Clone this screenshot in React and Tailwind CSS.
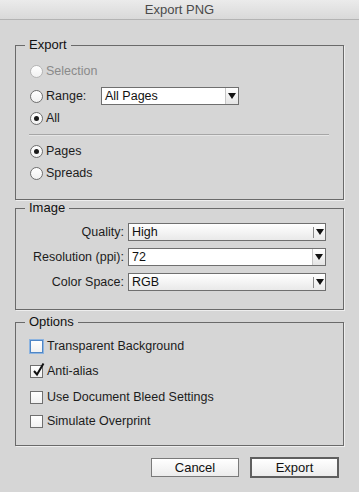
import React from 'react';

function Radio({ checked, disabled, label }) {
    return (
        <div className="flex items-center h-[20px]">
            <span
                className={`w-[13px] h-[13px] rounded-full border flex items-center justify-center bg-gradient-to-b from-white to-[#f1f1f1] ${disabled ? 'border-[#b5b5b5]' : 'border-[#6f6f6f]'}`}
            >
                {checked && <span className="w-[5px] h-[5px] rounded-full bg-[#1a1a1a]" />}
            </span>
            <span className={`ml-[3px] ${disabled ? 'text-[#8a8a8a]' : 'text-[#1c1c1c]'}`}>{label}</span>
        </div>
    );
}

function Checkbox({ checked, focused, label }) {
    return (
        <div className="flex items-center h-[20px]">
            <span
                className={`relative w-[13px] h-[13px] border bg-gradient-to-b from-white to-[#f1f1f1] ${focused ? 'border-[#4f86c6] shadow-[0_0_0_1px_#8db4e0]' : 'border-[#6f6f6f]'}`}
            >
                {checked && (
                    <svg className="absolute left-[1px] top-[-4px]" width="13" height="15" viewBox="0 0 13 15">
                        <path d="M2 9 L5 12.5 L11.5 1.5" fill="none" stroke="#111" strokeWidth="2" />
                    </svg>
                )}
            </span>
            <span className="ml-[4px] text-[#1c1c1c]">{label}</span>
        </div>
    );
}

function Arrow() {
    return (
        <svg width="8" height="6" viewBox="0 0 8 6">
            <path d="M0 0 H8 L4 6 Z" fill="#111" />
        </svg>
    );
}

function Select({ value, editable, className }) {
    return (
        <div
            className={`flex h-[18px] border border-[#6f6f6f] ${editable ? 'bg-white' : 'bg-gradient-to-b from-white to-[#e9e9e9]'} ${className}`}
        >
            <span className="flex-1 pl-[3px] leading-[16px] text-[#111]">{value}</span>
            {editable ? (
                <span className="w-[13px] flex items-center justify-center border-l border-[#c6c6c6] bg-gradient-to-b from-white to-[#e4e4e4]">
                    <Arrow />
                </span>
            ) : (
                <span className="w-[13px] flex items-center justify-center">
                    <span className="h-[11px] border-l border-[#8a8a8a] mr-[2px]" />
                    <Arrow />
                </span>
            )}
        </div>
    );
}

function Group({ title, className, children }) {
    return (
        <fieldset
            className={`w-[329px] border border-[#6a6a6a] shadow-[1px_1px_0_#eeeeee] ${className}`}
        >
            <legend className="ml-[9px] px-[4px] text-[13px] leading-[14px] text-[#111]">{title}</legend>
            {children}
        </fieldset>
    );
}

export default function App() {
    return (
        <div
            className="w-[359px] h-[492px] bg-[#d6d6d6] text-[12.5px] leading-[16px] overflow-hidden"
            style={{ fontFamily: '"Liberation Sans", Arial, sans-serif' }}
        >
            <div className="h-[20px] border-b border-[#b3b3b3] bg-gradient-to-b from-[#ebebeb] to-[#d9d9d9] text-center text-[13px] leading-[19px] text-[#4a4a4a]">
                Export PNG
            </div>

            <div className="px-[15px]">
                <Group title="Export" className="mt-[18px]">
                    <div className="pl-[14px] pt-[9px] pb-[16px]">
                        <Radio disabled label="Selection" />
                        <div className="flex items-center h-[20px] mt-[5px]">
                            <span className="w-[13px] h-[13px] rounded-full border border-[#6f6f6f] bg-gradient-to-b from-white to-[#f1f1f1]" />
                            <span className="ml-[3px] w-[55px] text-[#1c1c1c]">Range:</span>
                            <Select value="All Pages" editable className="w-[138px] h-[17px]" />
                        </div>
                        <div className="mt-[2px]">
                            <Radio checked label="All" />
                        </div>
                        <div className="mt-[6px] mr-[14px] -ml-[1px] h-[2px] border-t border-[#a6a6a6] border-b border-b-[#e6e6e6]" />
                        <div className="mt-[5px]">
                            <Radio checked label="Pages" />
                        </div>
                        <div className="mt-[2px]">
                            <Radio label="Spreads" />
                        </div>
                    </div>
                </Group>

                <Group title="Image" className="mt-[1px]">
                    <div className="pt-[8px] pb-[18px] flex flex-col gap-[7px]">
                        <div className="flex items-center">
                            <span className="w-[108px] text-right text-[#1c1c1c]">Quality:</span>
                            <Select value="High" className="ml-[4px] w-[198px]" />
                        </div>
                        <div className="flex items-center">
                            <span className="w-[108px] text-right text-[#1c1c1c]">Resolution (ppi):</span>
                            <Select value="72" editable className="ml-[4px] w-[198px]" />
                        </div>
                        <div className="flex items-center">
                            <span className="w-[108px] text-right text-[#1c1c1c]">Color Space:</span>
                            <Select value="RGB" className="ml-[4px] w-[198px]" />
                        </div>
                    </div>
                </Group>

                <Group title="Options" className="mt-[5px]">
                    <div className="pl-[14px] pt-[7px] pb-[14px]">
                        <Checkbox focused label="Transparent Background" />
                        <div className="mt-[5px]">
                            <Checkbox checked label="Anti-alias" />
                        </div>
                        <div className="mt-[6px]">
                            <Checkbox label="Use Document Bleed Settings" />
                        </div>
                        <div className="mt-[4px]">
                            <Checkbox label="Simulate Overprint" />
                        </div>
                    </div>
                </Group>

                <div className="mt-[11px] flex items-center justify-end pr-[5px] gap-[11px]">
                    <button className="w-[88px] h-[19px] border border-[#7a7a7a] bg-gradient-to-b from-white to-[#ececec] text-[13px] leading-[17px] text-[#111]">
                        Cancel
                    </button>
                    <button className="w-[89px] h-[21px] border-2 border-[#5f5f5f] bg-gradient-to-b from-white to-[#ececec] text-[13px] leading-[17px] text-[#111]">
                        Export
                    </button>
                </div>
            </div>
        </div>
    );
}
